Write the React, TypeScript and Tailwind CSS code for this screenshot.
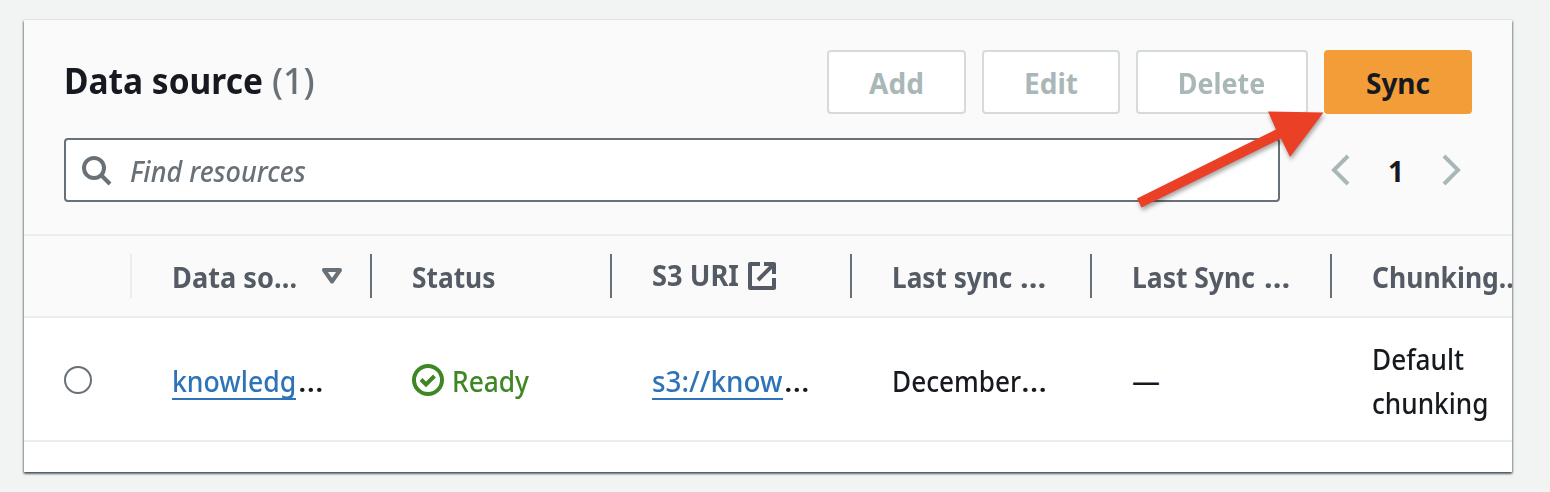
import type { ReactNode } from "react";

function Label({ children, className = "" }: { children: ReactNode; className?: string }) {
  return <span className={`inline-block origin-left whitespace-nowrap ${className}`}>{children}</span>;
}

function HeaderCell({ children }: { children: ReactNode }) {
  return (
    <div className="flex h-full w-60 shrink-0 items-center justify-between pl-10 font-bold text-[#545b64]">
      {children}
      <span className="h-11 w-0.5 shrink-0 bg-[#687078]" />
    </div>
  );
}

function Cell({ children, className = "" }: { children: ReactNode; className?: string }) {
  return <div className={`flex w-60 shrink-0 items-center pt-1 pl-10 ${className}`}>{children}</div>;
}

function CellLink({ children, className }: { children: ReactNode; className: string }) {
  return (
    <a className={`mb-0.5 flex h-10 border-b-2 border-[#2e73b8] text-[#2e73b8] ${className}`}>
      {children}
    </a>
  );
}

function DisabledButton({ children, className }: { children: ReactNode; className: string }) {
  return (
    <button
      className={`flex h-16 items-center justify-center rounded-[4px] border-2 border-[#d5dbdb] bg-white pt-0.5 font-bold text-[#aab7b8] ${className}`}
    >
      {children}
    </button>
  );
}

export default function App() {
  return (
    <div className="relative h-[492px] w-[1550px] overflow-hidden bg-[#f2f3f3] pt-5 pl-6 font-['Noto_Sans',sans-serif] text-[28px] leading-[44px] font-medium text-[#16191f]">
      <div className="flex h-[452px] w-[1488px] flex-col overflow-hidden bg-white shadow-[0_2px_2px_0_rgba(0,28,36,0.5),1px_1px_2px_0_rgba(0,28,36,0.3),-1px_1px_2px_0_rgba(0,28,36,0.3),0_-1px_0_0_#eaeded]">
        <div className="h-[216px] shrink-0 border-b-2 border-[#eaeded] bg-[#fafafa] pt-[30px] pr-10 pl-10">
          <div className="flex h-16 items-center justify-between">
            <h2 className="flex pb-0.5 text-[36px] leading-[44px]">
              <Label className="w-[208px] scale-x-[0.93] font-bold">Data source</Label>
              <Label className="scale-x-[0.99] text-[#687078]">(1)</Label>
            </h2>
            <div className="flex gap-4">
              <DisabledButton className="w-[139px]">Add</DisabledButton>
              <DisabledButton className="w-[138px]">Edit</DisabledButton>
              <DisabledButton className="w-[172px]">
                <span className="inline-block scale-x-[0.96]">Delete</span>
              </DisabledButton>
              <button className="flex h-16 w-[148px] items-center justify-center rounded-[4px] bg-[#f29d38] pt-0.5 font-bold">
                Sync
              </button>
            </div>
          </div>
          <div className="mt-6 flex h-16">
            <div className="flex w-[1216px] items-center rounded-[4px] border-2 border-[#687078] bg-white pl-4 text-[#687078]">
              <svg className="mt-1 h-8 w-8" viewBox="0 0 32 32" fill="none" stroke="currentColor" strokeWidth="4">
                <circle cx="12" cy="12" r="10" />
                <path d="M19 19 L28 28" />
              </svg>
              <Label className="ml-4 scale-x-[0.965] pt-0.5 italic">Find resources</Label>
            </div>
            <div className="ml-[50px] flex items-center text-[#aab7b8]">
              <svg className="h-8 w-5" viewBox="0 0 20 32" fill="none" stroke="currentColor" strokeWidth="4">
                <path d="M18 2 L4 16 L18 30" />
              </svg>
              <span className="w-[92px] pt-0.5 text-center font-bold text-[#16191f]">1</span>
              <svg className="h-8 w-5" viewBox="0 0 20 32" fill="none" stroke="currentColor" strokeWidth="4">
                <path d="M2 2 L16 16 L2 30" />
              </svg>
            </div>
          </div>
        </div>

        <div className="flex h-[82px] shrink-0 items-center border-b-2 border-[#eaeded] bg-[#fafafa]">
          <div className="flex w-[108px] shrink-0 justify-end">
            <span className="h-11 w-0.5 bg-[#eaeded]" />
          </div>
          <HeaderCell>
            <Label className="w-[150px] scale-x-[0.97] pt-0.5">Data so…</Label>
            <svg className="mr-7 h-4 w-5 shrink-0" viewBox="0 0 20 16" fill="none" stroke="#687078" strokeWidth="4" strokeLinejoin="round">
              <path d="M2 2 H18 L10 13.5 Z" />
            </svg>
          </HeaderCell>
          <HeaderCell>
            <Label className="scale-x-[0.94] pt-0.5">Status</Label>
          </HeaderCell>
          <HeaderCell>
            <span className="flex items-center">
              <Label className="w-24 scale-x-[0.975] pb-0.5">S3 URI</Label>
              <svg className="h-7 w-7" viewBox="0 0 28 28" fill="none" stroke="currentColor" strokeWidth="4" strokeLinejoin="round">
                <path d="M12 2 H2 V26 H26 V16" />
                <path d="M16 2 H26 V12 M26 2 L10 18" />
              </svg>
            </span>
          </HeaderCell>
          <HeaderCell>
            <Label className="w-[128px] scale-x-[0.935] pt-0.5">Last sync</Label>
            <Label className="mr-auto scale-x-[1.1] pt-0.5">…</Label>
          </HeaderCell>
          <HeaderCell>
            <Label className="w-[132px] scale-x-[0.945] pt-0.5">Last Sync</Label>
            <Label className="mr-auto scale-x-[1.1] pt-0.5">…</Label>
          </HeaderCell>
          <HeaderCell>
            <Label className="scale-x-[0.945] pt-0.5">Chunking…</Label>
          </HeaderCell>
        </div>

        <div className="flex h-[124px] shrink-0 border-b-2 border-[#eaeded]">
          <div className="flex w-[108px] shrink-0 items-center pt-0.5 pl-10">
            <span className="h-7 w-7 rounded-full border-2 border-[#687078]" />
          </div>
          <Cell>
            <CellLink className="w-[124px]">
              <Label className="-mt-px scale-x-[0.95]">knowledg</Label>
            </CellLink>
            <Label className="ml-0.5 scale-x-[1.13]">…</Label>
          </Cell>
          <Cell className="text-[#3f8624]">
            <svg className="mr-2 mb-0.5 h-8 w-8" viewBox="0 0 32 32" fill="none" stroke="currentColor" strokeWidth="4">
              <circle cx="16" cy="16" r="14" />
              <path d="M9 15.5 L14 20.5 L22.5 12" />
            </svg>
            <Label className="scale-x-[0.94]">Ready</Label>
          </Cell>
          <Cell>
            <CellLink className="w-[131px]">
              <Label className="-mt-px scale-x-[0.995]">s3://know</Label>
            </CellLink>
            <Label className="ml-px scale-x-[1.13]">…</Label>
          </Cell>
          <Cell>
            <Label className="w-[127px] scale-x-[0.935]">December</Label>
            <Label className="ml-0.5 scale-x-[1.15]">…</Label>
          </Cell>
          <Cell>
            <Label>—</Label>
          </Cell>
          <Cell>
            <Label className="scale-x-[0.935]">
              Default
              <br />
              chunking
            </Label>
          </Cell>
        </div>
      </div>

      <svg className="absolute top-[90px] left-[1120px] h-[130px] w-[220px] drop-shadow-[1px_3px_2px_rgba(0,0,0,0.35)]" viewBox="1120 90 220 130">
        <path d="M1137 198.5 L1276 129.5 L1268 111.5 L1323.5 112.5 L1290 157 L1281 138.5 L1141.5 207.5 Z" fill="#ea4025" />
      </svg>
    </div>
  );
}
